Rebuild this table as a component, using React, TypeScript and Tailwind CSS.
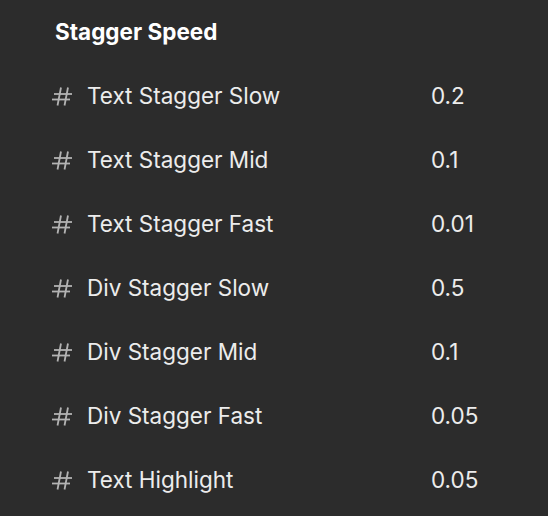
import React from "react";

const rows: [string, string][] = [
  ["Text Stagger Slow", "0.2"],
  ["Text Stagger Mid", "0.1"],
  ["Text Stagger Fast", "0.01"],
  ["Div Stagger Slow", "0.5"],
  ["Div Stagger Mid", "0.1"],
  ["Div Stagger Fast", "0.05"],
  ["Text Highlight", "0.05"],
];

function Hash() {
  return (
    <svg width="20" height="19" viewBox="0 0 20 19" fill="none" stroke="#b3b3b3" strokeWidth="1.8">
      <path d="M9 0.5 L5.5 18.5" />
      <path d="M16 0.5 L12.5 18.5" />
      <path d="M2 7 L20 7" />
      <path d="M0 12.5 L18 12.5" />
    </svg>
  );
}

export default function App() {
  return (
    <div
      className="w-[548px] h-[516px] bg-[#2c2c2c] overflow-hidden"
      style={{ fontFamily: "Inter, 'Noto Sans', sans-serif" }}
    >
      <div className="pl-[55px] pt-[17px] h-[64px]">
        <div className="text-[22.5px] leading-[30px] font-bold text-white">Stagger Speed</div>
      </div>
      <div className="flex flex-col">
        {rows.map(([label, value], i) => (
          <div key={i} className="flex items-center h-[64px]">
            <div className="w-[87px] pl-[52px] flex items-center">
              <Hash />
            </div>
            <div className="w-[344px] text-[22.5px] text-[#ececec]">{label}</div>
            <div className="text-[22.5px] text-[#ececec]">{value}</div>
          </div>
        ))}
      </div>
    </div>
  );
}
